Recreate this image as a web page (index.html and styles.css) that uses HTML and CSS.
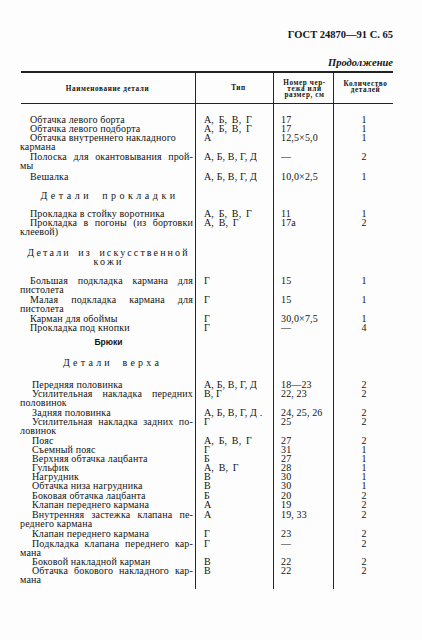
FILE: index.html
```html
<!DOCTYPE html>
<html lang="ru">
<head>
<meta charset="utf-8">
<title>ГОСТ 24870—91 С. 65</title>
<link rel="stylesheet" href="styles.css">
</head>
<body>
<div class="page">
  <div class="doc-title">ГОСТ 24870—91 С. 65</div>
  <div class="continuation">Продолжение</div>

  <div class="table">
    <div class="row head">
      <div class="c name"><span>Наименование детали</span></div>
      <div class="c type"><span>Тип</span></div>
      <div class="c num"><span>Номер чер-<br>тежа или<br>размер, см</span></div>
      <div class="c qty"><span>Количество<br>деталей</span></div>
    </div>

    <div class="row first-row">
      <div class="c name"><span class="first">Обтачка левого борта</span></div>
      <div class="c type wide">А, Б, В, Г</div>
      <div class="c num">17</div>
      <div class="c qty">1</div>
    </div>
    <div class="row">
      <div class="c name"><span class="first">Обтачка левого подборта</span></div>
      <div class="c type wide">А, Б, В, Г</div>
      <div class="c num">17</div>
      <div class="c qty">1</div>
    </div>
    <div class="row gap-05">
      <div class="c name"><span class="first">Обтачка внутреннего накладного</span><span class="cont">кармана</span></div>
      <div class="c type">А</div>
      <div class="c num">12,5×5,0</div>
      <div class="c qty">1</div>
    </div>
    <div class="row gap-1">
      <div class="c name"><span class="first just">Полоска для окантовывания прой-</span><span class="cont">мы</span></div>
      <div class="c type">А, Б, В, Г, Д</div>
      <div class="c num">—</div>
      <div class="c qty">2</div>
    </div>
    <div class="row gap-2">
      <div class="c name"><span class="first">Вешалка</span></div>
      <div class="c type">А, Б, В, Г, Д</div>
      <div class="c num">10,0×2,5</div>
      <div class="c qty">1</div>
    </div>

    <div class="row gap-10">
      <div class="c name"><span class="section s1">Детали прокладки</span></div>
      <div class="c type"></div>
      <div class="c num"></div>
      <div class="c qty"></div>
    </div>

    <div class="row gap-9">
      <div class="c name"><span class="first">Прокладка в стойку воротника</span></div>
      <div class="c type wide">А, Б, В, Г</div>
      <div class="c num">11</div>
      <div class="c qty">1</div>
    </div>
    <div class="row">
      <div class="c name"><span class="first just">Прокладка в погоны (из бортовки</span><span class="cont">клеевой)</span></div>
      <div class="c type wide">А, В, Г</div>
      <div class="c num">17а</div>
      <div class="c qty">2</div>
    </div>

    <div class="row gap-12">
      <div class="c name"><span class="section s2">Детали из искусственной</span><span class="section s2">кожи</span></div>
      <div class="c type"></div>
      <div class="c num"></div>
      <div class="c qty"></div>
    </div>

    <div class="row gap-10">
      <div class="c name"><span class="first just">Большая подкладка кармана для</span><span class="cont">пистолета</span></div>
      <div class="c type">Г</div>
      <div class="c num">15</div>
      <div class="c qty">1</div>
    </div>
    <div class="row gap-05">
      <div class="c name"><span class="first just">Малая подкладка кармана для</span><span class="cont">пистолета</span></div>
      <div class="c type">Г</div>
      <div class="c num">15</div>
      <div class="c qty">1</div>
    </div>
    <div class="row gap-15">
      <div class="c name"><span class="first">Карман для обоймы</span></div>
      <div class="c type">Г</div>
      <div class="c num">30,0×7,5</div>
      <div class="c qty">1</div>
    </div>
    <div class="row">
      <div class="c name"><span class="first">Прокладка под кнопки</span></div>
      <div class="c type">Г</div>
      <div class="c num">—</div>
      <div class="c qty">4</div>
    </div>

    <div class="row gap-6">
      <div class="c name"><span class="part">Брюки</span></div>
      <div class="c type"></div>
      <div class="c num"></div>
      <div class="c qty"></div>
    </div>
    <div class="row gap-11">
      <div class="c name"><span class="section s3">Детали верха</span></div>
      <div class="c type"></div>
      <div class="c num"></div>
      <div class="c qty"></div>
    </div>

    <div class="row gap-13 deep">
      <div class="c name"><span class="first">Передняя половинка</span></div>
      <div class="c type">А, Б, В, Г, Д</div>
      <div class="c num">18—23</div>
      <div class="c qty">2</div>
    </div>
    <div class="row deep">
      <div class="c name"><span class="first just">Усилительная накладка передних</span><span class="cont">половинок</span></div>
      <div class="c type">В, Г</div>
      <div class="c num">22, 23</div>
      <div class="c qty">2</div>
    </div>
    <div class="row gap-1 deep">
      <div class="c name"><span class="first">Задняя половинка</span></div>
      <div class="c type">А, Б, В, Г, Д .</div>
      <div class="c num">24, 25, 26</div>
      <div class="c qty">2</div>
    </div>
    <div class="row deep">
      <div class="c name"><span class="first just">Усилительная накладка задних по-</span><span class="cont">ловинок</span></div>
      <div class="c type">Г</div>
      <div class="c num">25</div>
      <div class="c qty">2</div>
    </div>
    <div class="row gap-1 deep">
      <div class="c name"><span class="first">Пояс</span></div>
      <div class="c type wide">А, Б, В, Г</div>
      <div class="c num">27</div>
      <div class="c qty">2</div>
    </div>
    <div class="row deep">
      <div class="c name"><span class="first">Съемный пояс</span></div>
      <div class="c type">Г</div>
      <div class="c num">31</div>
      <div class="c qty">1</div>
    </div>
    <div class="row deep">
      <div class="c name"><span class="first">Верхняя обтачка лацбанта</span></div>
      <div class="c type">Б</div>
      <div class="c num">27</div>
      <div class="c qty">1</div>
    </div>
    <div class="row deep">
      <div class="c name"><span class="first">Гульфик</span></div>
      <div class="c type wide">А, В, Г</div>
      <div class="c num">28</div>
      <div class="c qty">1</div>
    </div>
    <div class="row deep">
      <div class="c name"><span class="first">Нагрудник</span></div>
      <div class="c type">В</div>
      <div class="c num">30</div>
      <div class="c qty">1</div>
    </div>
    <div class="row deep">
      <div class="c name"><span class="first">Обтачка низа нагрудника</span></div>
      <div class="c type">В</div>
      <div class="c num">30</div>
      <div class="c qty">1</div>
    </div>
    <div class="row gap-1 deep">
      <div class="c name"><span class="first">Боковая обтачка лацбанта</span></div>
      <div class="c type">Б</div>
      <div class="c num">20</div>
      <div class="c qty">2</div>
    </div>
    <div class="row deep">
      <div class="c name"><span class="first">Клапан переднего кармана</span></div>
      <div class="c type">А</div>
      <div class="c num">19</div>
      <div class="c qty">2</div>
    </div>
    <div class="row gap-1 deep">
      <div class="c name"><span class="first just">Внутренняя застежка клапана пе-</span><span class="cont">реднего кармана</span></div>
      <div class="c type">А</div>
      <div class="c num">19, 33</div>
      <div class="c qty">2</div>
    </div>
    <div class="row gap-1 deep">
      <div class="c name"><span class="first">Клапан переднего кармана</span></div>
      <div class="c type">Г</div>
      <div class="c num">23</div>
      <div class="c qty">2</div>
    </div>
    <div class="row gap-1 deep">
      <div class="c name"><span class="first just">Подкладка клапана переднего кар-</span><span class="cont">мана</span></div>
      <div class="c type">Г</div>
      <div class="c num">—</div>
      <div class="c qty">2</div>
    </div>
    <div class="row deep">
      <div class="c name"><span class="first">Боковой накладной карман</span></div>
      <div class="c type">В</div>
      <div class="c num">22</div>
      <div class="c qty">2</div>
    </div>
    <div class="row deep last">
      <div class="c name"><span class="first just">Обтачка бокового накладного кар-</span><span class="cont">мана</span></div>
      <div class="c type">В</div>
      <div class="c num">22</div>
      <div class="c qty">2</div>
    </div>
  </div>
</div>
</body>
</html>
```
FILE: styles.css
```css
html, body {
  margin: 0;
  padding: 0;
  background: #fdfdfd;
}

body {
  font-family: "Liberation Serif", "DejaVu Serif", serif;
  color: #141414;
}

.page {
  width: 422px;
  height: 640px;
  box-sizing: border-box;
  padding: 29px 29px 0 20px;
  overflow: hidden;
}

.doc-title {
  text-align: right;
  font-weight: bold;
  font-size: 10.5px;
  line-height: 12px;
}

.continuation {
  margin-top: 16px;
  text-align: right;
  font-weight: bold;
  font-style: italic;
  font-size: 10.5px;
  line-height: 12px;
}

.table {
  margin-top: 2px;
  margin-left: 1px;
  width: 372px;
  border-top: 2px solid #222;
}

.row {
  display: grid;
  grid-template-columns: 174px 78px 60px 60px;
  font-size: 10px;
  line-height: 9px;
  letter-spacing: 0.15px;
  --gap: 0px;
}

.row > .c {
  padding-top: var(--gap);
  box-sizing: border-box;
}

.row > .c + .c {
  border-left: 1px solid #262626;
}

.gap-05 { --gap: 0.5px; }
.gap-1 { --gap: 1px; }
.gap-15 { --gap: 1.5px; }
.gap-2 { --gap: 2px; }
.gap-6 { --gap: 6px; }
.gap-9 { --gap: 9px; }
.gap-10 { --gap: 10px; }
.gap-11 { --gap: 11px; }
.gap-12 { --gap: 12px; }
.gap-13 { --gap: 13px; }

.first-row { --gap: 10.5px; }
.last > .c { padding-bottom: 5px; }

/* header */
.row.head {
  height: 30px;
  border-bottom: 1px solid #222;
  font-size: 7.2px;
  font-weight: bold;
  line-height: 6px;
  letter-spacing: 0.6px;
}

.row.head > .c {
  display: flex;
  align-items: center;
  justify-content: center;
  text-align: center;
  padding-top: 0;
}

.row.head > .name {
  padding-top: 1px;
  padding-left: 2px;
}

.row.head > .num {
  padding-top: 2px;
  padding-left: 2px;
}

.row.head > .qty {
  padding-bottom: 2px;
  padding-left: 4px;
}

/* body cells */
.name {
  margin-left: -1px;
  padding-right: 2px;
}

.first {
  display: block;
  padding-left: 10px;
}

.deep .first {
  padding-left: 12px;
}

.just {
  text-align: justify;
  text-align-last: justify;
}

.cont {
  display: block;
}

.type {
  padding-left: 8px;
}

.type.wide {
  word-spacing: 2px;
}

.num {
  padding-left: 7px;
}

.qty {
  text-align: center;
  padding-left: 1px;
}

.section {
  display: block;
  text-align: center;
}

.s1 {
  letter-spacing: 3.5px;
  word-spacing: 4px;
  padding-left: 6px;
}

.s2 {
  letter-spacing: 2.1px;
  word-spacing: 3px;
  padding-left: 4px;
}

.s3 {
  letter-spacing: 3.2px;
  word-spacing: 4px;
  padding-left: 12px;
}

.part {
  display: block;
  text-align: center;
  font-family: "Liberation Sans", Arial, sans-serif;
  font-weight: bold;
  font-size: 8.5px;
  letter-spacing: 0;
  padding-left: 4px;
}
```
